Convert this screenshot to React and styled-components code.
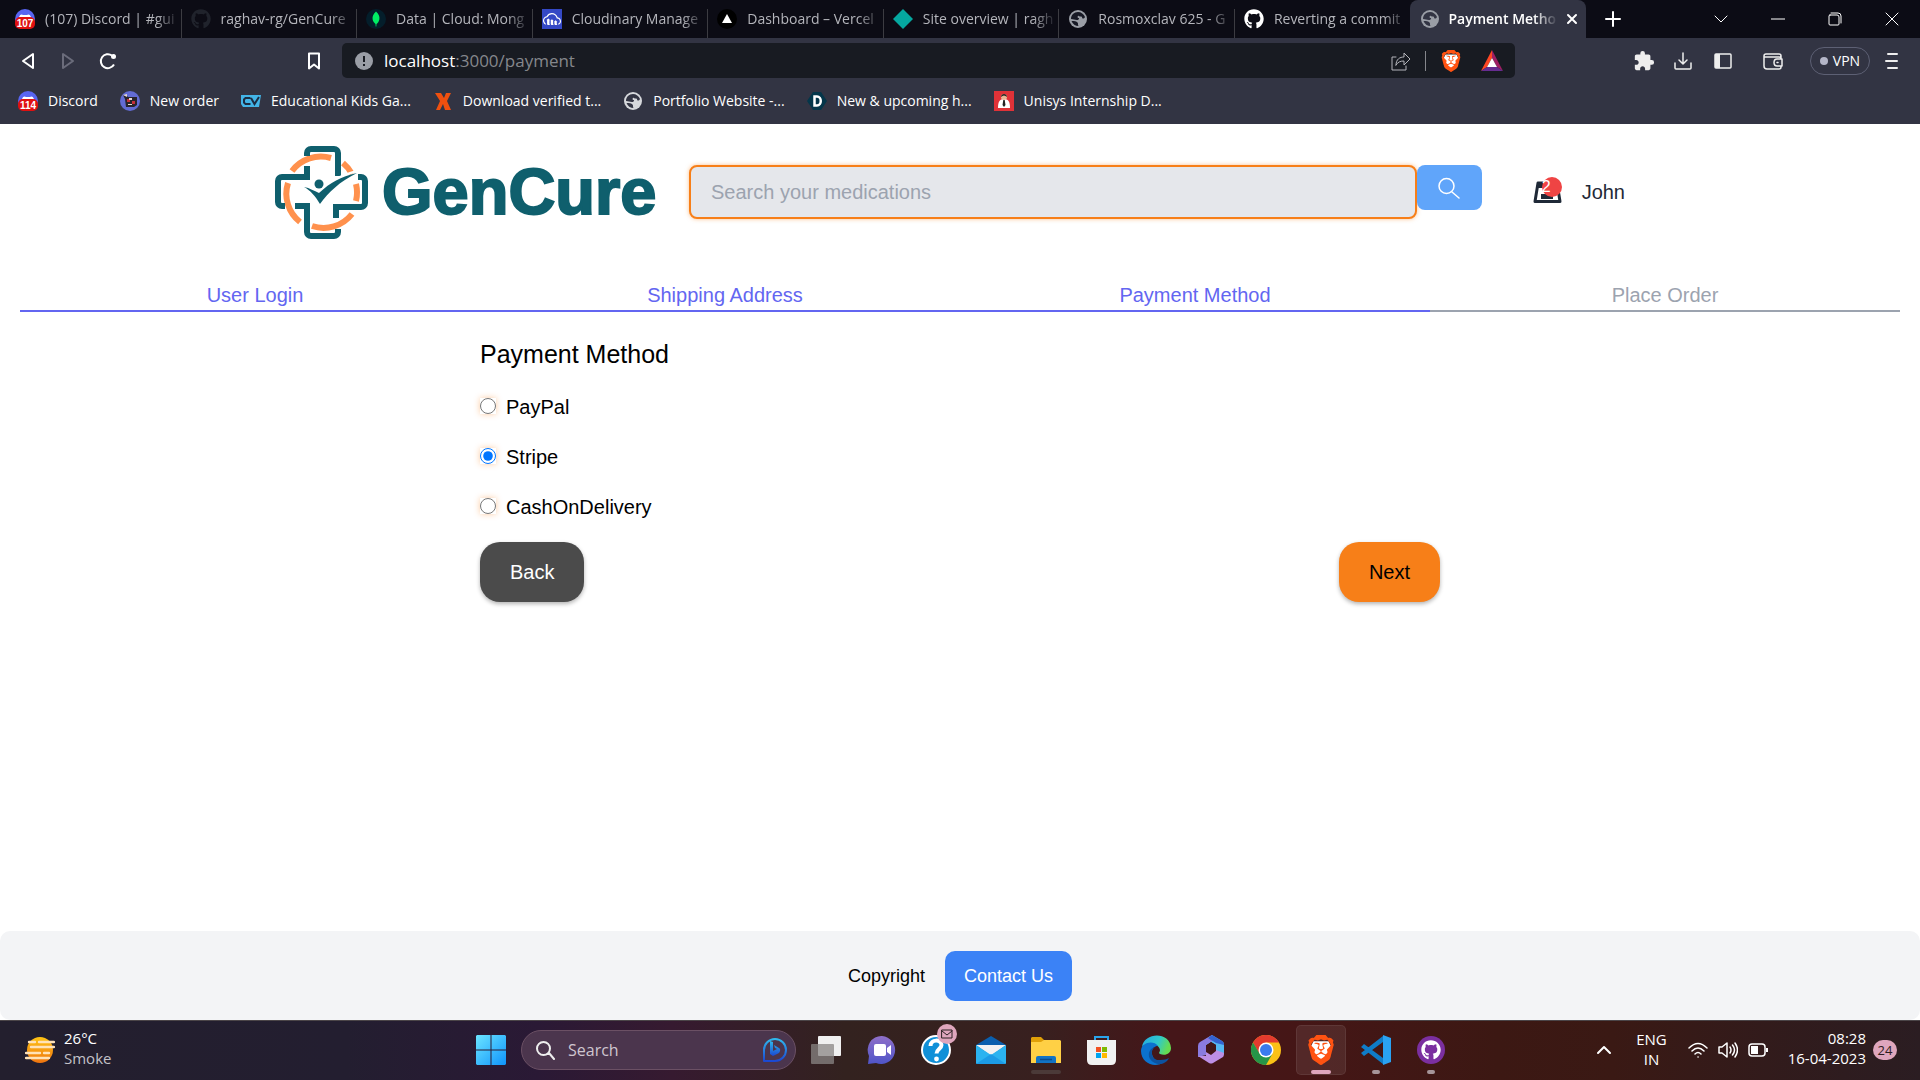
import React, { useState } from "react";
import styled, { createGlobalStyle, css } from "styled-components";
import { FaGithub } from "react-icons/fa6";
import { SiBrave, SiCloudinary } from "react-icons/si";
import { MdExtension } from "react-icons/md";

const ui = `"Open Sans", "Noto Sans", sans-serif`;
const arial = `"Liberation Sans", Arial, sans-serif`;

const GlobalStyle = createGlobalStyle`
  *, *::before, *::after { box-sizing: border-box; }
  body { margin: 0; background: #fff; }
  button, input { font: inherit; color: inherit; }
  button { border: 0; padding: 0; background: none; cursor: pointer; }
  a { color: inherit; text-decoration: none; }
  svg { display: block; flex: none; }
`;

const Screen = styled.div`
  min-height: 100vh;
  display: flex;
  flex-direction: column;
  font-family: ${arial};
`;

/* ---------- browser window ---------- */

const Browser = styled.header`
  background: #323443;
  color: #fff;
  font-family: ${ui};
  font-size: 14px;
`;

const TabStrip = styled.div`
  display: flex;
  align-items: stretch;
  height: 38px;
  padding-left: 6px;
  background: #0c0c15;
`;

const TabList = styled.nav`
  flex: 0 1 1580px;
  min-width: 0;
  display: grid;
  grid-template-columns: repeat(9, minmax(0, 1fr));
`;

const Tab = styled.a`
  display: flex;
  align-items: center;
  gap: 10px;
  padding: 0 2px 0 9px;
  color: #b4b5bb;
  background: linear-gradient(#3c3c42, #3c3c42) right bottom / 1px 29px no-repeat;
  ${(p) =>
    p.$last &&
    css`
      background: none;
    `}
  ${(p) =>
    p.$active &&
    css`
      gap: 8px;
      color: #fff;
      font-weight: 600;
      background: #323443;
      border-radius: 8px 8px 0 0;
      padding: 0 8px 0 10px;
    `}
`;

const TabTitle = styled.span`
  flex: 1;
  min-width: 0;
  overflow: hidden;
  white-space: nowrap;
  line-height: 20px;
  mask-image: linear-gradient(to right, #000 calc(100% - 24px), transparent);
`;

const NewTab = styled.button`
  width: 54px;
  display: grid;
  place-items: center;
`;

const WindowButtons = styled.div`
  margin-left: auto;
  display: flex;
`;

const WindowButton = styled.button`
  width: 57px;
  display: grid;
  place-items: center;
`;

const Toolbar = styled.div`
  display: flex;
  align-items: center;
  height: 45px;
  padding: 0 20px 0 18px;
`;

const ToolGroup = styled.div`
  display: flex;
  align-items: center;
  gap: ${(p) => p.$gap}px;
`;

const BookmarkSlot = styled.div`
  display: flex;
  flex: 1;
  justify-content: flex-end;
  padding-right: 18px;
`;

const IconButton = styled.button`
  display: grid;
  place-items: center;
  width: 20px;
  height: 24px;
`;

const RewardsButton = styled(IconButton)`
  width: 22px;
  margin-left: 7px;
`;

const WalletButton = styled(IconButton)`
  margin: 0 7px 0 10px;
`;

const MenuButton = styled(IconButton)`
  width: 16px;
`;

const RightTools = styled.div`
  display: flex;
  align-items: center;
  gap: 20px;
  margin-left: 118px;
`;

const AddressBar = styled.div`
  flex: 0 1 1173px;
  min-width: 0;
  display: flex;
  align-items: center;
  height: 35px;
  padding: 0 12px 0 13px;
  border-radius: 5px;
  background: #181b22;
`;

const Address = styled.span`
  flex: 1;
  margin-left: 11px;
  font-size: 17px;
  line-height: 24px;
  color: #85878c;
  b {
    font-weight: 400;
    color: #fff;
  }
`;

const Divider = styled.span`
  width: 1px;
  height: 20px;
  background: #85878c;
`;

const Vpn = styled.button`
  display: flex;
  align-items: center;
  justify-content: center;
  gap: 5px;
  width: 60px;
  height: 28px;
  border: 1px solid #5d6074;
  border-radius: 14px;
  font-size: 14px;
  &::before {
    content: "";
    width: 8px;
    height: 8px;
    border-radius: 50%;
    background: #b4b6c8;
  }
`;

const Bookmarks = styled.nav`
  display: flex;
  align-items: center;
  gap: 22px;
  height: 41px;
  padding: 0 18px 6px;
`;

const Bookmark = styled.a`
  display: flex;
  align-items: center;
  gap: 10px;
  line-height: 20px;
  white-space: nowrap;
`;

/* ---------- store page ---------- */

const Page = styled.div`
  flex: 1;
  display: flex;
  flex-direction: column;
  background: #fff;
  color: #000;
  font-size: 20px;
  line-height: 30px;
`;

const SiteHeader = styled.header`
  display: flex;
  align-items: center;
  width: 100%;
  max-width: 1370px;
  height: 136px;
  margin: 0 auto;
`;

const Brand = styled.a`
  display: flex;
  align-items: center;
  gap: 14px;
  width: 414px;
  color: #0f5f6d;
  font-size: 65px;
  line-height: 64px;
  font-weight: 700;
  -webkit-text-stroke: 2px #0f5f6d;
`;

const SearchForm = styled.form`
  flex: 1;
  display: flex;
  align-items: flex-start;
`;

const SearchInput = styled.input`
  flex: 1;
  min-width: 0;
  height: 54px;
  padding: 0 20px;
  border: 2px solid #f77f18;
  border-radius: 8px;
  outline: none;
  background: #e5e7eb;
  box-shadow: 0 0 4px rgba(247, 127, 24, 0.5);
  &::placeholder {
    color: #9ca3af;
    opacity: 1;
  }
`;

const SearchButton = styled.button`
  display: grid;
  place-items: center;
  width: 65px;
  height: 45px;
  border-radius: 8px;
  background: #60a5fa;
`;

const Account = styled.div`
  display: flex;
  align-items: center;
  gap: 20px;
  padding: 0 20px 0 51px;
  color: #1f2937;
`;

const Cart = styled.a`
  position: relative;
  display: block;
`;

const CartCount = styled.span`
  position: absolute;
  top: -4px;
  right: 0;
  width: 20px;
  height: 20px;
  border-radius: 50%;
  background: #ef4444;
  color: #fff;
  font-size: 16px;
  line-height: 20px;
`;

const Steps = styled.ol`
  list-style: none;
  display: flex;
  margin: 20px 20px 0;
  padding: 0;
`;

const Step = styled.li`
  flex: 1;
  text-align: center;
  color: ${(p) => (p.$done ? "#6366f1" : "#9ca3af")};
  border-bottom: 2px solid currentColor;
`;

const PaymentForm = styled.form`
  width: 100%;
  max-width: 960px;
  margin: 25px auto 40px;
`;

const Title = styled.h1`
  margin: 0 0 20px;
  font-size: 25px;
  line-height: 35px;
  font-weight: 400;
`;

const Option = styled.label`
  display: flex;
  align-items: center;
  gap: 10px;
  margin-bottom: 20px;
`;

const Radio = styled.input`
  width: 16px;
  height: 16px;
  margin: 0 0 3px;
  accent-color: #0075ff;
  box-shadow: 0 0 6px rgba(247, 127, 24, 0.4);
`;

const Actions = styled.div`
  display: flex;
  justify-content: space-between;
`;

const ActionButton = styled.button`
  height: 60px;
  padding: 0 30px;
  border-radius: 20px;
  background: ${(p) => (p.$primary ? "#f77f18" : "#4b4b4b")};
  color: ${(p) => (p.$primary ? "#000" : "#fff")};
  box-shadow: 0 2px 4px rgba(0, 0, 0, 0.3);
`;

const Footer = styled.footer`
  display: flex;
  justify-content: center;
  align-items: center;
  gap: 20px;
  margin-top: auto;
  padding: 20px;
  height: 89px;
  border-radius: 10px;
  background: #f3f4f6;
  font-size: 18px;
`;

const ContactLink = styled.a`
  padding: 10px 19px;
  border-radius: 10px;
  background: #3b82f6;
  color: #fff;
`;

/* ---------- desktop task bar ---------- */

const Taskbar = styled.footer`
  display: flex;
  align-items: center;
  justify-content: space-between;
  height: 60px;
  padding: 0 23px 0 25px;
  box-shadow: inset 0 1px #4b4548;
  color: #fff;
  font-family: ${ui};
  font-size: 15px;
  line-height: 20px;
  background: linear-gradient(
    90deg,
    #231f2e 0%,
    #231e30 18%,
    #2a1935 28%,
    #361a30 35%,
    #33221f 44%,
    #38201f 54%,
    #451619 61%,
    #451616 68%,
    #3c1813 78%,
    #3a1914 84%,
    #2e1c1f 96%,
    #2b1d22 100%
  );
`;

const Weather = styled.button`
  flex: 1;
  display: flex;
  align-items: center;
  gap: 9px;
  text-align: left;
  span {
    padding-bottom: 4px;
  }
  small {
    display: block;
    font-size: inherit;
    color: #c4c2c8;
  }
`;

const Apps = styled.nav`
  display: flex;
  align-items: center;
  gap: 5px;
`;

const AppButton = styled.button`
  position: relative;
  display: grid;
  place-items: center;
  width: 50px;
  height: 50px;
  border-radius: 5px;
  ${(p) =>
    p.$active &&
    css`
      background: rgba(255, 255, 255, 0.08);
      box-shadow: inset 0 0 0 1px rgba(255, 255, 255, 0.07);
    `}
  ${(p) =>
    p.$mark &&
    css`
      &::after {
        content: "";
        position: absolute;
        bottom: 1px;
        width: ${p.$mark}px;
        height: 4px;
        border-radius: 2px;
        background: ${p.$active ? "#dfa6bd" : p.$mark > 20 ? "#4b3a38" : "#a69599"};
      }
    `}
`;

const MailBadge = styled.span`
  position: absolute;
  top: -1px;
  right: 4px;
  display: grid;
  place-items: center;
  width: 20px;
  height: 20px;
  border-radius: 50%;
  background: #dfa6bd;
`;

const TaskSearch = styled.label`
  display: flex;
  align-items: center;
  gap: 12px;
  width: 275px;
  height: 40px;
  padding: 0 7px 0 14px;
  border: 1px solid #6b5064;
  border-radius: 20px;
  background: #4b354d;
  input {
    flex: 1;
    min-width: 0;
    padding: 0;
    border: 0;
    outline: none;
    background: none;
    font-size: 16px;
  }
  input::placeholder {
    color: #cfc6d0;
    opacity: 1;
  }
`;

const Tray = styled.div`
  flex: 1;
  display: flex;
  justify-content: flex-end;
  align-items: center;
`;

const Language = styled.button`
  margin: 0 21px 0 24px;
  padding-bottom: 2px;
  text-align: center;
`;

const TrayIcons = styled.div`
  display: flex;
  gap: 10px;
  margin-right: 20px;
`;

const Clock = styled.time`
  padding-bottom: 4px;
  text-align: right;
`;

const Notifications = styled.span`
  width: 24px;
  margin-left: 7px;
  border-radius: 10px;
  background: #dfa6bd;
  color: #2e1c20;
  font-size: 13px;
  text-align: center;
`;

/* ---------- drawings ---------- */

const DiscordIcon = ({ n }) => (
  <svg width="20" height="20" viewBox="0 0 20 20">
    <circle cx="10" cy="10" r="10" fill="#5865f2" />
    <path d="M4 8c1-3 3-3 4-2h4c1-1 3-1 4 2v2H4z" fill="#fff" />
    <rect y="8" width="20" height="12" rx="5" fill="#e01010" />
    <text x="10" y="17.5" textAnchor="middle" fontFamily="Liberation Sans" fontWeight="700" fontSize="10" fill="#fff">{n}</text>
  </svg>
);
const MongoIcon = () => (
  <svg width="20" height="20" viewBox="0 0 20 20">
    <circle cx="10" cy="10" r="10" fill="#041e2b" />
    <path d="M10 2.500c3 3 3.800 5 3.400 7.800-.4 2.400-1.600 3.700-2.900 4.700l-.2 2.500h-.6L9.500 15c-1.300-1-2.600-2.400-2.900-4.700C6.300 7.500 7 5.500 10 2.500z" fill="#00ed64" />
  </svg>
);
const CloudinaryIcon = () => (
  <svg width="20" height="20" viewBox="0 0 20 20">
    <rect width="20" height="20" fill="#3448c5" />
    <SiCloudinary x="1" y="1" size={18} color="#fff" />
  </svg>
);
const VercelIcon = () => (
  <svg width="20" height="20" viewBox="0 0 20 20">
    <circle cx="10" cy="10" r="10" fill="#000" />
    <path d="M10 5l5 9H5z" fill="#fff" />
  </svg>
);
const NetlifyIcon = () => (
  <svg width="20" height="20" viewBox="0 0 20 20">
    <path d="M10 0l10 10-10 10L0 10z" fill="#05a8a0" />
  </svg>
);
const GlobeIcon = ({ c = "#9a9ea6", hole = "#171925" }) => (
  <svg width="20" height="20" viewBox="0 0 20 20">
    <circle cx="10" cy="10" r="9" fill={c} />
    <path d="M10 3c3 0 6 2 7 5-1 2-3 2-3 0-1-1-2 0-3-1s-2 1-1 2c2 0 1 2-1 2-3 0-3-1-6-1C3 6 6 3 10 3zM3.500 12c3 0 5 0 6 1.500 1 1 0 2 1 3.500-3 0-6-2-7-5z" fill={hole} />
  </svg>
);
const OrderIcon = () => (
  <svg width="20" height="20" viewBox="0 0 20 20">
    <circle cx="10" cy="10" r="10" fill="#626bd3" />
    <path d="M3 4l4 1 1 1h9v8l-3 2H6L5 8z" fill="#28242b" />
    <path d="M7 8h3v3H7zm5 2h3v3h-3z" fill="#c52f37" />
    <path d="M3 4l4-1v3zm6 3h3v2H9zm-1 6h4v1H8z" fill="#e5d8d2" />
  </svg>
);
const CvIcon = () => (
  <svg width="20" height="20" viewBox="0 0 20 20">
    <path d="M0 4h20l-2 12H2L0 13z" fill="#43b5e8" />
    <path d="M9.500 7H4.500L3 8.500v3L4.500 13h5M10 7l3.500 6L18 6" fill="none" stroke="#1c2d43" strokeWidth="2" />
  </svg>
);
const XIcon = () => (
  <svg width="20" height="20" viewBox="0 0 20 20">
    <path d="M2 2h6l3 5 2-5h5l-4 8 4 9h-6l-2-6-3 6H3l4-9z" fill="#f0500f" />
  </svg>
);
const DIcon = () => (
  <svg width="20" height="20" viewBox="0 0 20 20">
    <path d="M6 1h8l6 9-6 9H6L0 10z" fill="#04364a" />
    <path d="M7.500 5.500H10c5 0 5 9 0 9H7.500z" fill="none" stroke="#fff" strokeWidth="2.500" />
  </svg>
);
const UnisysIcon = () => (
  <svg width="20" height="20" viewBox="0 0 20 20">
    <rect width="20" height="20" fill="#e03238" />
    <path d="M4 17c0-7 2-9 6-9s6 2 6 9z" fill="#fff" />
    <circle cx="10" cy="6" r="3" fill="#e9b796" />
    <path d="M7 6c0-4 6-4 6 0-2-2-4-2-6 0zM9.300 9h1.400l.8 5-1.500 2-1.500-2z" fill="#222" />
  </svg>
);
const BraveIcon = ({ size = 20 }) => (
  <svg width={size} height={size} viewBox="0 0 24 24">
    <path d="M6 5h12l2 4-3 9-5 4-5-4-3-9z" fill="#fff" />
    <SiBrave size={24} color="#ff5312" />
  </svg>
);
const BatIcon = () => (
  <svg width="22" height="22" viewBox="0 0 22 22">
    <path d="M11 0L0 21l6-4 5-9z" fill="#ff4724" />
    <path d="M11 0l11 21-6-4-5-9z" fill="#9e1f63" />
    <path d="M0 21h22l-6-4H6z" fill="#662d91" />
    <path d="M11 8l5 9H6z" fill="#fff" />
  </svg>
);
const Line = ({ w = 20, h = w, vb, d, sw = 2, c = "#fff", f = "none" }) => (
  <svg width={w} height={h} viewBox={vb || `0 0 ${w} ${h}`}>
    <path d={d} fill={f} stroke={c} strokeWidth={sw} strokeLinejoin="round" strokeLinecap="round" />
  </svg>
);

const LogoMark = () => (
  <svg width="93" height="93" viewBox="0 0 93 93" fill="none">
    <g stroke="#ff914d" strokeWidth="6">
      <path d="M17 25A36 36 0 0 1 56 12" />
      <path d="M68 17A36 36 0 0 1 77 28" />
      <path d="M81 38A36 36 0 0 1 81 55" />
      <path d="M77 68A36 36 0 0 1 37 80" />
      <path d="M25 76A36 36 0 0 1 13 37" />
    </g>
    <g stroke="#0f5f6d" strokeWidth="6">
      <path d="M32 10V7a4 4 0 0 1 4-4h23a4 4 0 0 1 4 4v23" />
      <path d="M32 20v11H7a4 4 0 0 0-4 4v21a4 4 0 0 0 4 4h3" />
      <path d="M20 60h12v26a4 4 0 0 0 4 4h23a4 4 0 0 0 4-4v-3" />
      <path d="M61 72V61h25a4 4 0 0 0 4-4V35a4 4 0 0 0-4-4h-3" />
    </g>
    <path d="M27 40l17 10c13-12 22-19 38-24l-1-2C63 29 55 35 47 40z" fill="#fff" />
    <path d="M29 41c6 1 10 4 15 6 12-11 21-16 38-20C64 36 54 46 45 58 41 51 35 44 29 41z" fill="#0f5f6d" />
    <circle cx="44" cy="38" r="4.500" fill="#0f5f6d" />
  </svg>
);
const CartIcon = () => (
  <svg width="29" height="23" viewBox="0 0 29 23">
    <path d="M5 2h19l3 18.500H2z" fill="#fff" stroke="#1f2937" strokeWidth="3" strokeLinejoin="round" />
    <path d="M4 1h10v6H4zM8 13h12v5H8z" fill="#1f2937" />
  </svg>
);
const WeatherIcon = () => (
  <svg width="30" height="28" viewBox="0 0 30 28">
    <defs>
      <linearGradient id="sun" x2="0" y2="1"><stop stopColor="#ffc414" /><stop offset="1" stopColor="#ee7410" /></linearGradient>
    </defs>
    <circle cx="15" cy="14" r="13" fill="url(#sun)" />
    <path d="M4 6h6m4 0h15M6 11h23M1 17h14m4 0h5M1 22h23" stroke="#ffe2b8" strokeWidth="2.400" strokeLinecap="round" />
  </svg>
);
const WindowsIcon = () => (
  <svg width="30" height="30" viewBox="0 0 30 30">
    <defs>
      <linearGradient id="win" x2="1" y2="1"><stop stopColor="#6ce5ff" /><stop offset="1" stopColor="#0f94fb" /></linearGradient>
    </defs>
    <path d="M1 0h13.500v14.500H0V1zM15.500 0H29l1 1v13.500H15.500zM0 15.500h14.500V30H1l-1-1zM15.500 15.500H30V29l-1 1H15.500z" fill="url(#win)" />
  </svg>
);
const BingIcon = () => (
  <svg width="26" height="26" viewBox="0 0 26 26" fill="none">
    <defs>
      <linearGradient id="bing" x2="0" y2="1"><stop stopColor="#2fb9ee" /><stop offset="1" stopColor="#1b48d2" /></linearGradient>
    </defs>
    <path d="M2 24V13A11 11 0 1 1 13 24z" stroke="url(#bing)" strokeWidth="2" strokeLinejoin="round" />
    <path d="M8 4l3 1v9l4-2-2-1-1-3 5 3c2 1 1 4 0 5l-6 3-3-2z" fill="url(#bing)" />
  </svg>
);
const TaskViewIcon = () => (
  <svg width="30" height="28" viewBox="0 0 30 28">
    <rect x="7" width="23" height="20" rx="1" fill="#f0f0f0" />
    <rect y="8" width="23" height="20" rx="1" fill="#8a8684" fillOpacity=".75" />
  </svg>
);
const ChatIcon = () => (
  <svg width="29" height="29" viewBox="0 0 29 29">
    <defs>
      <linearGradient id="chat" x2="0" y2="1"><stop stopColor="#8f6fc8" /><stop offset="1" stopColor="#4f55c8" /></linearGradient>
    </defs>
    <path d="M15 0a14 14 0 1 1-6 27l-8 1 1-8A14 14 0 0 1 15 0z" fill="url(#chat)" />
    <rect x="7" y="8" width="12" height="12" rx="2" fill="#fff" />
    <path d="M20 12l4-3v10l-4-3z" fill="#fff" />
  </svg>
);
const HelpIcon = () => (
  <svg width="30" height="30" viewBox="0 0 30 30">
    <circle cx="15" cy="15" r="14" fill="#1090d8" stroke="#fff" strokeWidth="2" />
    <path d="M9.500 11c0-7 11-7 11-1 0 4-5 4-5 8.500" fill="none" stroke="#fff" strokeWidth="4" />
    <circle cx="15.500" cy="24" r="2.400" fill="#fff" />
  </svg>
);
const MailIcon = () => (
  <svg width="30" height="28" viewBox="0 0 30 28">
    <path d="M15 0l15 9v5H0V9z" fill="#0a5fae" />
    <path d="M0 9h30L15 20z" fill="#f2f2f2" />
    <path d="M0 9l15 10L30 9v18a1 1 0 0 1-1 1H1a1 1 0 0 1-1-1z" fill="#2bb3f0" />
    <path d="M0 28L15 18l15 10z" fill="#1c9be6" />
  </svg>
);
const FolderIcon = () => (
  <svg width="30" height="28" viewBox="0 0 30 28">
    <path d="M0 2l1-1h9l3 3v6H0z" fill="#e0a008" />
    <path d="M0 6h10l3-2h16l1 1v22H0z" fill="#ffd045" />
    <path d="M5 27v-5q0-2 2-2h16q2 0 2 2v5z" fill="#1273c4" />
    <path d="M9 23.500h12" stroke="#0a4b8c" strokeWidth="1.500" />
  </svg>
);
const StoreIcon = () => (
  <svg width="29" height="29" viewBox="0 0 29 29">
    <path d="M8 6V1h13v5" fill="none" stroke="#2aa5ec" strokeWidth="2" />
    <path d="M0 4h29v20q0 5-5 5H5q-5 0-5-5z" fill="#f1f1f1" />
    <path d="M9 11h5v5H9z" fill="#f25022" />
    <path d="M15 11h5v5h-5z" fill="#7fba00" />
    <path d="M9 17h5v5H9z" fill="#00a4ef" />
    <path d="M15 17h5v5h-5z" fill="#ffb900" />
  </svg>
);
const EdgeIcon = () => (
  <svg width="30" height="30" viewBox="0 0 30 30">
    <defs>
      <linearGradient id="edge" x2="1" y2=".3"><stop stopColor="#25a7df" /><stop offset=".6" stopColor="#2fc8cc" /><stop offset="1" stopColor="#65dc52" /></linearGradient>
    </defs>
    <path d="M1 12C3-3 29-4 30 13c0 6-6 8-11 6-2-1 0-2 0-4C18 8 6 6 1 12z" fill="url(#edge)" />
    <path d="M0 16C0 7 13 5 17 11c-4 0-7 3-6 8 1 6 7 9 12 8C14 34 0 28 0 16z" fill="#0c72ce" />
    <path d="M14 12c-6 4-3 14 5 13 4 0 7-1 9-2-4 8-14 8-19 1-3-5 0-11 5-12z" fill="#0c52a0" />
  </svg>
);
const OfficeIcon = () => (
  <svg width="28" height="30" viewBox="0 0 28 30">
    <path d="M15 0l10 6q2 1 2 4v10l-8-4v-6l-5-3-5 3V4z" fill="#55b7f2" />
    <path d="M15 0L3 7q-2 1-2 4v11l8-2V10l8-5z" fill="#8a7be0" />
    <path d="M1 21l11 7q2 1 4 0l10-6q1-1 1-4l-8-3-5 4-5-3v5z" fill="#bd8fe6" />
    <path d="M15 0l10 6q2 1 2 4l-8-2-5-3-3-2z" fill="#3462cf" />
    <path d="M9 11l5-4 5 3v6l-5 4-5-3z" fill="#421619" />
  </svg>
);
const ChromeIcon = () => (
  <svg width="30" height="30" viewBox="0 0 30 30">
    <circle cx="15" cy="15" r="15" fill="#fbc116" />
    <path d="M2 7.500A15 15 0 0 1 28 7.500H15L8.500 19z" fill="#e33b2e" />
    <path d="M2 7.500A15 15 0 0 0 15 30l6.500-11.500h-13z" fill="#269548" />
    <circle cx="15" cy="15" r="7.500" fill="#fff" />
    <circle cx="15" cy="15" r="6" fill="#3a7bee" />
  </svg>
);
const CodeIcon = () => (
  <svg width="30" height="30" viewBox="0 0 30 30">
    <path d="M3 9l19 14v6L0 12zM0 18L22 1v6L3 21z" fill="#0f7cc8" />
    <path d="M22 0l8 3v24l-8 3z" fill="#2aa2f2" />
  </svg>
);
const GithubDesktopIcon = () => (
  <svg width="28" height="28" viewBox="0 0 28 28">
    <circle cx="14" cy="14" r="14" fill="#7b2fa0" />
    <FaGithub x="4" y="4" size={20} color="#fff" />
  </svg>
);

/* ---------- data ---------- */

const tabs = [
  ["(107) Discord | #gui", <DiscordIcon n="107" />],
  ["raghav-rg/GenCure", <FaGithub size={20} color="#20232c" />],
  ["Data | Cloud: Mong", <MongoIcon />],
  ["Cloudinary Manage", <CloudinaryIcon />],
  ["Dashboard – Vercel", <VercelIcon />],
  ["Site overview | ragh", <NetlifyIcon />],
  ["Rosmoxclav 625 - G", <GlobeIcon />],
  ["Reverting a commit", <FaGithub size={20} color="#fff" />],
];

const bookmarks = [
  ["Discord", <DiscordIcon n="114" />],
  ["New order", <OrderIcon />],
  ["Educational Kids Ga...", <CvIcon />],
  ["Download verified t...", <XIcon />],
  ["Portfolio Website -...", <GlobeIcon c="#d6d8dc" hole="#323443" />],
  ["New & upcoming h...", <DIcon />],
  ["Unisys Internship D...", <UnisysIcon />],
];

const steps = ["User Login", "Shipping Address", "Payment Method", "Place Order"];
const methods = ["PayPal", "Stripe", "CashOnDelivery"];

const apps = [
  { name: "Task view", icon: <TaskViewIcon /> },
  { name: "Chat", icon: <ChatIcon /> },
  { name: "Get help", icon: <HelpIcon />, mail: true },
  { name: "Mail", icon: <MailIcon /> },
  { name: "File Explorer", icon: <FolderIcon />, mark: 30 },
  { name: "Store", icon: <StoreIcon /> },
  { name: "Edge", icon: <EdgeIcon /> },
  { name: "Microsoft 365", icon: <OfficeIcon /> },
  { name: "Chrome", icon: <ChromeIcon /> },
  { name: "Brave", icon: <BraveIcon size={30} />, active: true, mark: 20 },
  { name: "Code", icon: <CodeIcon />, mark: 8 },
  { name: "GitHub Desktop", icon: <GithubDesktopIcon />, mark: 8 },
];

export default function App() {
  const [method, setMethod] = useState("Stripe");
  return (
    <Screen>
      <GlobalStyle />
      <Browser>
        <TabStrip>
          <TabList>
            {tabs.map(([title, icon], i) => (
              <Tab key={title} href="#" $last={i === tabs.length - 1}>
                {icon}
                <TabTitle>{title}</TabTitle>
              </Tab>
            ))}
            <Tab href="#" $active>
              <GlobeIcon hole="#323443" />
              <TabTitle>Payment Metho</TabTitle>
              <Line w={12} d="M2 2l8 8M10 2l-8 8" />
            </Tab>
          </TabList>
          <NewTab aria-label="New tab"><Line w={16} d="M8 1v14M1 8h14" /></NewTab>
          <WindowButtons>
            <WindowButton aria-label="Search tabs"><Line w={14} h={8} d="M1 1l6 6 6-6" sw={1} /></WindowButton>
            <WindowButton aria-label="Minimise"><Line w={14} h={2} d="M0 1h14" sw={1} /></WindowButton>
            <WindowButton aria-label="Restore">
              <Line w={14} d="M2 3h7q2 0 2 2v7q0 1-1 1H2q-1 0-1-1V4q0-1 1-1zM3 1h7q3 0 3 3v7" sw={1} />
            </WindowButton>
            <WindowButton aria-label="Close"><Line w={14} d="M1 1l12 12M13 1L1 13" sw={1} /></WindowButton>
          </WindowButtons>
        </TabStrip>

        <Toolbar>
          <ToolGroup $gap={20}>
            <IconButton aria-label="Back"><Line w={16} h={18} d="M13 2v14L3 9z" /></IconButton>
            <IconButton aria-label="Forward"><Line w={16} h={18} d="M3 2v14l10-7z" c="#6b6c7b" /></IconButton>
            <IconButton aria-label="Reload">
              <svg width="18" height="18" viewBox="0 0 18 18">
                <path d="M15 12.500A7 7 0 1 1 13 3.500" fill="none" stroke="#fff" strokeWidth="2" />
                <circle cx="14.500" cy="4.500" r="2.500" fill="#fff" />
              </svg>
            </IconButton>
          </ToolGroup>
          <BookmarkSlot>
            <IconButton aria-label="Bookmark"><Line w={14} h={18} d="M2 1.500h10v15l-5-4-5 4z" /></IconButton>
          </BookmarkSlot>
          <AddressBar>
            <svg width="18" height="18" viewBox="0 0 18 18">
              <circle cx="9" cy="9" r="9" fill="#9a9ea6" />
              <path d="M9 4v6M9 12v2" stroke="#181b22" strokeWidth="2" />
            </svg>
            <Address><b>localhost</b>:3000/payment</Address>
            <ToolGroup $gap={14}>
              <IconButton aria-label="Share">
                <Line w={20} d="M5 6H1v13h14v-4M5 14c0-6 4-8 8-8V2l6 6-6 6v-4c-4 0-6 1-8 4z" sw={1} c="#b4b5bb" />
              </IconButton>
              <Divider />
              <IconButton aria-label="Shields"><BraveIcon size={22} /></IconButton>
              <RewardsButton aria-label="Rewards"><BatIcon /></RewardsButton>
            </ToolGroup>
          </AddressBar>
          <RightTools>
            <IconButton aria-label="Extensions"><MdExtension size={22} color="#eee" /></IconButton>
            <IconButton aria-label="Downloads"><Line w={18} d="M9 1v11M5 8l4 4 4-4M1 11v5q0 1 1 1h14q1 0 1-1v-5" c="#eee" sw={1.5} /></IconButton>
            <IconButton aria-label="Sidebar">
              <svg width="18" height="16" viewBox="0 0 18 16">
                <rect x="1" y="1" width="16" height="14" rx="1" fill="none" stroke="#eee" strokeWidth="1.500" />
                <path d="M1 1h5v14H1z" fill="#eee" />
              </svg>
            </IconButton>
            <WalletButton aria-label="Wallet">
              <Line w={20} h={18} d="M18 6V4q0-2-2-2H3Q1 2 1 4v10q0 3 3 3h12q2 0 2-2v-1M1 5h15q2 0 2 2M19 7h-5q-3 0-3 3.500t3 3.500h5zM14 10.500h1" c="#eee" sw={1.5} />
            </WalletButton>
            <ToolGroup $gap={14}>
              <Vpn>VPN</Vpn>
              <MenuButton aria-label="Menu"><Line w={14} h={18} d="M3 2h9M1 9h11M3 16h9" c="#eee" /></MenuButton>
            </ToolGroup>
          </RightTools>
        </Toolbar>

        <Bookmarks>
          {bookmarks.map(([title, icon]) => (
            <Bookmark key={title} href="#">{icon}{title}</Bookmark>
          ))}
        </Bookmarks>
      </Browser>

      <Page>
        <SiteHeader>
          <Brand href="#"><LogoMark />GenCure</Brand>
          <SearchForm>
            <SearchInput aria-label="Search your medications" placeholder="Search your medications" />
            <SearchButton type="button" aria-label="Search">
              <Line w={22} d="M16 9A7.500 7.500 0 1 1 1 9a7.500 7.500 0 0 1 15 0zM14 15l7 6" sw={1.5} />
            </SearchButton>
          </SearchForm>
          <Account>
            <Cart href="#" aria-label="Cart"><CartIcon /><CartCount>2</CartCount></Cart>
            <a href="#">John</a>
          </Account>
        </SiteHeader>

        <Steps>
          {steps.map((s, i) => <Step key={s} $done={i < 3}>{s}</Step>)}
        </Steps>

        <PaymentForm>
          <Title>Payment Method</Title>
          {methods.map((m) => (
            <Option key={m}>
              <Radio type="radio" name="method" checked={method === m} onChange={() => setMethod(m)} />
              {m}
            </Option>
          ))}
          <Actions>
            <ActionButton type="button">Back</ActionButton>
            <ActionButton type="button" $primary>Next</ActionButton>
          </Actions>
        </PaymentForm>

        <Footer>
          <span>Copyright</span>
          <ContactLink href="#">Contact Us</ContactLink>
        </Footer>
      </Page>

      <Taskbar>
        <Weather>
          <WeatherIcon />
          <span>26°C<small>Smoke</small></span>
        </Weather>
        <Apps>
          <AppButton aria-label="Start"><WindowsIcon /></AppButton>
          <TaskSearch>
            <Line w={20} d="M14 8.500a6.500 6.500 0 1 1-13 0 6.500 6.500 0 0 1 13 0zM13 13l5 6" c="#eee" />
            <input aria-label="Search" placeholder="Search" />
            <BingIcon />
          </TaskSearch>
          {apps.map((a) => (
            <AppButton key={a.name} aria-label={a.name} $active={a.active} $mark={a.mark}>
              {a.icon}
              {a.mail && (
                <MailBadge><Line w={12} h={10} d="M1 1h10v8H1zM1 2l5 4 5-4" c="#2b2022" sw={1} /></MailBadge>
              )}
            </AppButton>
          ))}
        </Apps>
        <Tray>
          <Line w={16} h={10} d="M2 8l6-6 6 6" />
          <Language>ENG<br />IN</Language>
          <TrayIcons>
            <Line w={20} h={18} d="M1 7q9-9 18 0M4 10q6-6 12 0M7 13q3-3 6 0M10 16h.1" sw={1.5} />
            <Line w={20} h={18} d="M1 6h3l5-4v14l-5-4H1zM12 6q2 3 0 6M14.500 4q4 5 0 10M17 2q5 7 0 14" sw={1.5} />
            <svg width="20" height="18" viewBox="0 0 20 18">
              <rect x="1" y="3" width="16" height="12" rx="3" fill="none" stroke="#fff" strokeWidth="1.500" />
              <path d="M3 5h7v8H3zM18 7h2v4h-2z" fill="#fff" />
            </svg>
          </TrayIcons>
          <Clock>08:28<br />16-04-2023</Clock>
          <Notifications>24</Notifications>
        </Tray>
      </Taskbar>
    </Screen>
  );
}
